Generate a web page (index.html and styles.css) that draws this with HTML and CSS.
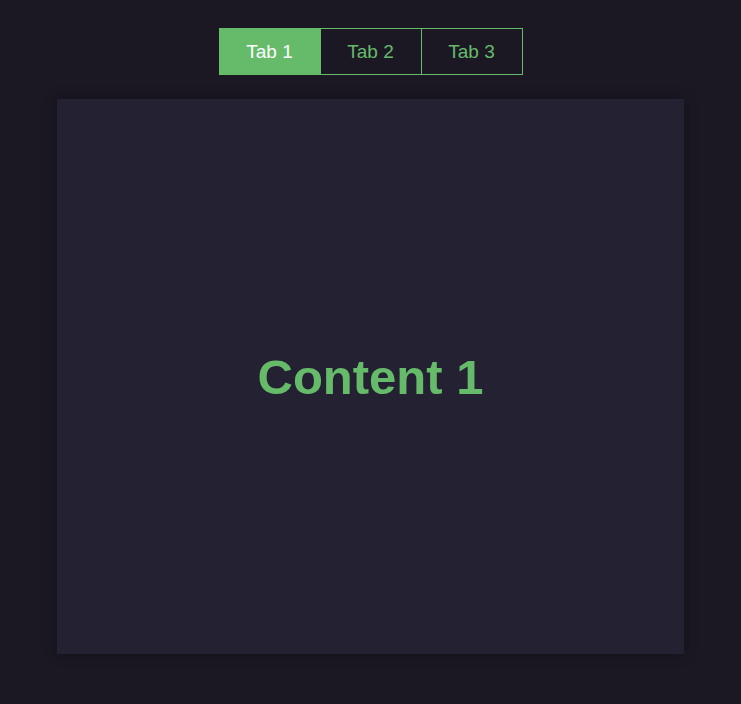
FILE: index.html
```html
<!DOCTYPE html>
<html lang="en">
<head>
<meta charset="utf-8">
<title>Tabs</title>
<link rel="stylesheet" href="styles.css">
</head>
<body>
<div class="app">
  <div class="tabs">
    <button class="tab active">Tab 1</button>
    <button class="tab">Tab 2</button>
    <button class="tab">Tab 3</button>
  </div>
  <div class="panel">
    <h1 class="panel-title">Content 1</h1>
  </div>
</div>
</body>
</html>
```
FILE: styles.css
```css
html, body {
  margin: 0;
  padding: 0;
  background: #1b1824;
  height: 100%;
}
body {
  font-family: "Liberation Sans", Arial, sans-serif;
}
.app {
  display: flex;
  flex-direction: column;
  align-items: center;
  padding-top: 28px;
  gap: 24px;
}
.tabs {
  display: flex;
}
.tab {
  width: 102px;
  height: 47px;
  margin-left: -1px;
  background: transparent;
  border: 1px solid #66bb6a;
  color: #66bb6a;
  font-family: "Liberation Sans", Arial, sans-serif;
  font-size: 19px;
  padding: 0;
  cursor: pointer;
}
.tab:first-child {
  margin-left: 0;
}
.tab.active {
  background: #66bb6a;
  color: #ffffff;
}
.panel {
  width: 627px;
  height: 555px;
  background: #242132;
  box-shadow: 0 0 12px rgba(0, 0, 0, 0.35);
  display: flex;
  align-items: center;
  justify-content: center;
}
.panel-title {
  margin: 0;
  color: #66bb6a;
  font-size: 49px;
  font-weight: bold;
}
```
